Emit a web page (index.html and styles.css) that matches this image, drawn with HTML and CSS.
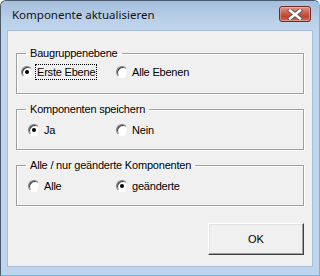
FILE: index.html
```html
<!DOCTYPE html>
<html lang="de">
<head>
    <meta charset="UTF-8">
    <meta name="viewport" content="width=device-width, initial-scale=1.0">
    <title>Komponente aktualisieren</title>
    <link rel="stylesheet" href="styles.css">
</head>
<body>
    <div class="window">
        <div class="titlebar">
            <span class="title">Komponente aktualisieren</span>
            <button class="close" aria-label="Schließen">
                <svg width="16" height="11" viewBox="0 0 16 11">
                    <path d="M3 1.5 L13 9.5 M13 1.5 L3 9.5" stroke="#5a5a5a" stroke-width="4.2" stroke-linecap="square"/>
                    <path d="M3 1.5 L13 9.5 M13 1.5 L3 9.5" stroke="#ffffff" stroke-width="2.4" stroke-linecap="square"/>
                </svg>
            </button>
        </div>
        <div class="dialog">
            <fieldset class="group first">
                <legend>Baugruppenebene</legend>
                <div class="options">
                    <label class="option"><span class="radio checked"></span><span class="focus">Erste Ebene</span></label>
                    <label class="option"><span class="radio"></span>Alle Ebenen</label>
                </div>
            </fieldset>
            <fieldset class="group">
                <legend>Komponenten speichern</legend>
                <div class="options">
                    <label class="option"><span class="radio checked"></span>Ja</label>
                    <label class="option"><span class="radio"></span>Nein</label>
                </div>
            </fieldset>
            <fieldset class="group">
                <legend>Alle / nur geänderte Komponenten</legend>
                <div class="options">
                    <label class="option"><span class="radio"></span>Alle</label>
                    <label class="option"><span class="radio checked"></span>geänderte</label>
                </div>
            </fieldset>
            <div class="actions">
                <button class="ok">OK</button>
            </div>
        </div>
    </div>
</body>
</html>
```

FILE: styles.css
```css
body {
    margin: 0;
    padding: 0;
    font-family: "Liberation Sans", Arial, sans-serif;
    font-size: 11px;
    letter-spacing: -0.2px;
    color: #000;
    background: #fff;
}
.window {
    width: 320px;
    height: 276px;
    box-sizing: border-box;
    border: 1px solid #4a5a6e;
    border-bottom-color: #3fcde6;
    border-right-color: #3fcde6;
    border-radius: 6px 6px 0 0;
    background: #bfd5ee;
    display: flex;
    flex-direction: column;
    padding: 0 6px 8px 6px;
}
.titlebar {
    height: 29px;
    margin: 0 -6px;
    padding: 0 8px 0 11px;
    display: flex;
    align-items: center;
    justify-content: space-between;
    background: linear-gradient(to bottom, #a4bedb, #b9cfe8 60%, #c0d6ee);
    border-radius: 6px 6px 0 0;
}
.title {
    font-family: "Noto Sans", "Open Sans", sans-serif;
    font-size: 11.5px;
    letter-spacing: 0;
    color: #111;
    padding-bottom: 2px;
}
.close {
    width: 32px;
    height: 16px;
    padding: 0;
    margin-top: -3px;
    border: 1px solid #6b2b26;
    border-radius: 3px;
    background: linear-gradient(to bottom, #e0978b, #c8553f 50%, #bd4430 70%, #d0715d);
    box-shadow: inset 0 0 0 1px rgba(255, 200, 190, 0.45);
    display: flex;
    align-items: center;
    justify-content: center;
}
.dialog {
    flex: 1;
    background: #f0f0f0;
    border: 1px solid #a8bcd3;
    padding: 16px 8px 0 8px;
    display: flex;
    flex-direction: column;
}
.group {
    margin: 0 0 9px 0;
    padding: 0;
    border: 1px solid #a0a0a0;
    box-shadow: 1px 1px 0 #fff, inset 1px 1px 0 #fff;
    min-width: 0;
}
.group legend {
    margin-left: 9px;
    padding: 0 4px;
    line-height: 13px;
}
.options {
    display: flex;
    padding: 6px 0 11px 11px;
    height: 16px;
}
.first .options {
    padding: 4px 0 13px 4px;
}
.option {
    display: flex;
    align-items: center;
    gap: 4px;
    line-height: 16px;
}
.option:first-child {
    width: 88px;
}
.first .option:first-child {
    width: 95px;
}
.radio {
    width: 12px;
    height: 12px;
    box-sizing: border-box;
    border-radius: 50%;
    background: #fff;
    border: 1px solid;
    border-color: #808080 #e8e8e8 #fff #808080;
    box-shadow: inset 1px 1px 0 #404040;
    position: relative;
}
.radio.checked::after {
    content: "";
    position: absolute;
    left: 3px;
    top: 3px;
    width: 4px;
    height: 4px;
    border-radius: 50%;
    background: #000;
}
.focus {
    outline: 1px dotted #000;
    padding: 0 1px;
    margin-left: -1px;
    line-height: 14px;
}
.actions {
    display: flex;
    justify-content: flex-end;
    margin-top: 8px;
}
.ok {
    width: 96px;
    height: 32px;
    font-family: "Liberation Sans", Arial, sans-serif;
    font-size: 11px;
    background: #f0f0f0;
    border: 1px solid;
    border-color: #fff #404040 #404040 #fff;
    box-shadow: inset -1px -1px 0 #a0a0a0, inset 1px 1px 0 #e3e3e3;
    padding: 0;
}
```
